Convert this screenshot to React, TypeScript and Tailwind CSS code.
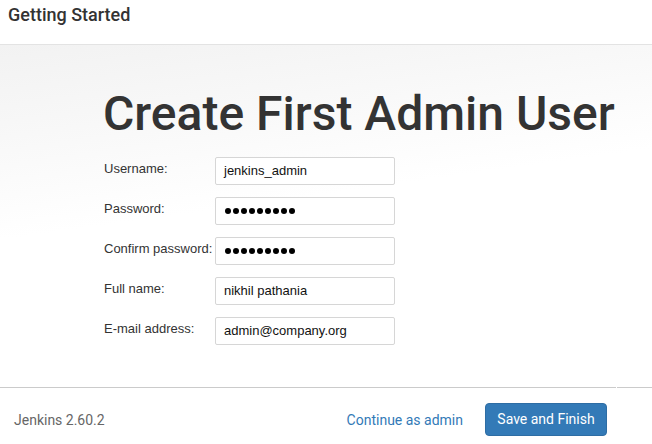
import React from "react";

const rows: { label: string; value: string; pw?: boolean }[] = [
  { label: "Username:", value: "jenkins_admin" },
  { label: "Password:", value: "", pw: true },
  { label: "Confirm password:", value: "", pw: true },
  { label: "Full name:", value: "nikhil pathania" },
  { label: "E-mail address:", value: "admin@company.org" },
];

export default function App() {
  return (
    <div className="w-[652px] h-[444px] flex flex-col bg-white overflow-hidden" style={{ fontFamily: "Roboto, sans-serif" }}>
      <div className="h-[45px] shrink-0 border-b border-[#e3e3e3] px-[8px] pt-[3px]">
        <div className="text-[18px] font-medium text-[#333] leading-[24px]">Getting Started</div>
      </div>
      <div className="flex-1 bg-[linear-gradient(172deg,#f2f2f2_0%,#f7f7f7_18%,#ffffff_45%)] pl-[103px]">
        <h1 className="mt-[44px] text-[48px] leading-[50px] font-medium text-[#333] whitespace-nowrap">
          Create First Admin User
        </h1>
        <div className="mt-[18px] flex flex-col gap-[12px] pl-[1px]" style={{ fontFamily: '"Liberation Sans", Arial, sans-serif' }}>
          {rows.map((r) => (
            <div key={r.label} className="flex items-start">
              <div className="w-[111px] pt-[4px] text-[13px] leading-[16px] text-[#333]">{r.label}</div>
              <div className="w-[180px] h-[28px] border border-[#d6d6d6] rounded-[2px] bg-white flex items-center pl-[8px] text-[13px] text-[#111]">
                {r.pw ? (
                  <div className="flex gap-[2px] pl-[1px]">
                    {Array.from({ length: 9 }).map((_, i) => (
                      <div key={i} className="w-[6px] h-[6px] rounded-full bg-black" />
                    ))}
                  </div>
                ) : (
                  r.value
                )}
              </div>
            </div>
          ))}
        </div>
      </div>
      <div className="flex shrink-0">
        <div className="w-[616px] h-px bg-[#cbcbcb]" />
        <div className="ml-[1px] flex-1 h-px bg-[#cbcbcb]" />
      </div>
      <div className="h-[56px] shrink-0 flex items-start pt-[15px] pl-[14px] pr-[45px]">
        <div className="mt-[9px] text-[14px] leading-[16px] text-[#666]">Jenkins 2.60.2</div>
        <div className="flex-1" />
        <div className="mt-[8px] text-[14px] leading-[18px] text-[#337ab7] mr-[22px]">Continue as admin</div>
        <div className="w-[122px] h-[33px] rounded-[4px] bg-[#337ab7] border border-[#2e6da4] text-white text-[14px] flex items-center justify-center">
          Save and Finish
        </div>
      </div>
    </div>
  );
}
